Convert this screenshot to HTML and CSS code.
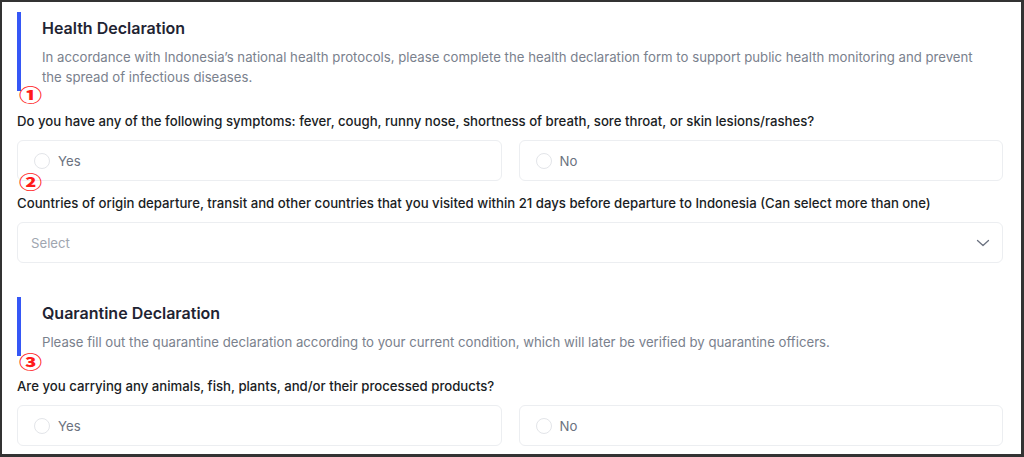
FILE: index.html
```html
<!DOCTYPE html>
<html lang="en">
<head>
<meta charset="utf-8">
<title>Declaration</title>
<link rel="stylesheet" href="styles.css">
</head>
<body>
<div class="frame">
  <section class="section">
    <header class="section-head">
      <h2 class="section-title">Health Declaration</h2>
      <p class="section-desc">In accordance with Indonesia’s national health protocols, please complete the health declaration form to support public health monitoring and prevent the spread of infectious diseases.</p>
    </header>
    <div class="field">
      <p class="question">Do you have any of the following symptoms: fever, cough, runny nose, shortness of breath, sore throat, or skin lesions/rashes?</p>
      <div class="options">
        <label class="option"><span class="radio"></span><span class="option-text">Yes</span></label>
        <label class="option"><span class="radio"></span><span class="option-text">No</span></label>
      </div>
    </div>
    <div class="field">
      <p class="question">Countries of origin departure, transit and other countries that you visited within 21 days before departure to Indonesia (Can select more than one)</p>
      <div class="select">
        <span class="placeholder">Select</span>
        <svg class="chevron" width="16" height="16" viewBox="0 0 16 16" fill="none"><path d="M2.5 5.5l5.5 5 5.5-5" stroke="#6b7280" stroke-width="1.3" stroke-linecap="round" stroke-linejoin="round"/></svg>
      </div>
    </div>
  </section>

  <section class="section section-second">
    <header class="section-head">
      <h2 class="section-title">Quarantine Declaration</h2>
      <p class="section-desc">Please fill out the quarantine declaration according to your current condition, which will later be verified by quarantine officers.</p>
    </header>
    <div class="field">
      <p class="question">Are you carrying any animals, fish, plants, and/or their processed products?</p>
      <div class="options">
        <label class="option"><span class="radio"></span><span class="option-text">Yes</span></label>
        <label class="option"><span class="radio"></span><span class="option-text">No</span></label>
      </div>
    </div>
  </section>

  <span class="mark mark-1">①</span>
  <span class="mark mark-2">②</span>
  <span class="mark mark-3">③</span>
</div>
</body>
</html>
```

FILE: styles.css
```css
* { box-sizing: border-box; }
html, body { margin: 0; padding: 0; background: #ffffff; }
body { font-family: Inter, "Noto Sans", "Liberation Sans", sans-serif; }

.frame {
  position: relative;
  width: 1024px;
  height: 457px;
  border: 2px solid #333333;
  border-right-width: 3px;
  border-bottom-width: 3px;
  overflow: hidden;
  padding: 10px 18px 0 15px;
  background: #ffffff;
}

.section-second { margin-top: 34px; }

.section-head {
  border-left: 4px solid #3557f6;
  padding: 4px 0 4px 21px;
}

.section-title {
  margin: 0;
  font-size: 16px;
  line-height: 24px;
  font-weight: 600;
  color: #1f2433;
}

.section-desc {
  margin: 7px 0 0 0;
  font-size: 13.2px;
  line-height: 20px;
  color: #7a818d;
  max-width: 950px;
}

.field { margin-top: 20px; }
.field + .field { margin-top: 12px; }

.question {
  margin: 0;
  font-size: 13.2px;
  line-height: 20px;
  font-weight: 500;
  color: #1a1d24;
}

.options {
  margin-top: 9px;
  display: grid;
  grid-template-columns: 1fr 1fr;
  gap: 17px;
}

.option {
  height: 41px;
  border: 1px solid #eceef1;
  border-radius: 6px;
  display: flex;
  align-items: center;
  padding-left: 16px;
  gap: 8px;
}

.radio {
  width: 16px;
  height: 16px;
  border-radius: 50%;
  border: 1px solid #e3e5e9;
  background: #ffffff;
}

.option-text {
  font-size: 13.2px;
  color: #6b7280;
}

.select {
  margin-top: 9px;
  height: 41px;
  border: 1px solid #eceef1;
  border-radius: 6px;
  display: flex;
  align-items: center;
  justify-content: space-between;
  padding: 0 11px 0 13px;
}

.placeholder {
  font-size: 13.2px;
  color: #a0a6b0;
}

.chevron { display: block; }

.mark {
  position: absolute;
  left: 17px;
  font-family: "Noto Sans CJK JP", sans-serif;
  font-size: 23px;
  line-height: 23px;
  font-weight: 900;
  color: #ff1a1a;
  transform: scaleY(0.78);
  transform-origin: left top;
}
.mark-1 { top: 84px; }
.mark-2 { top: 171px; }
.mark-3 { top: 351px; }
```
